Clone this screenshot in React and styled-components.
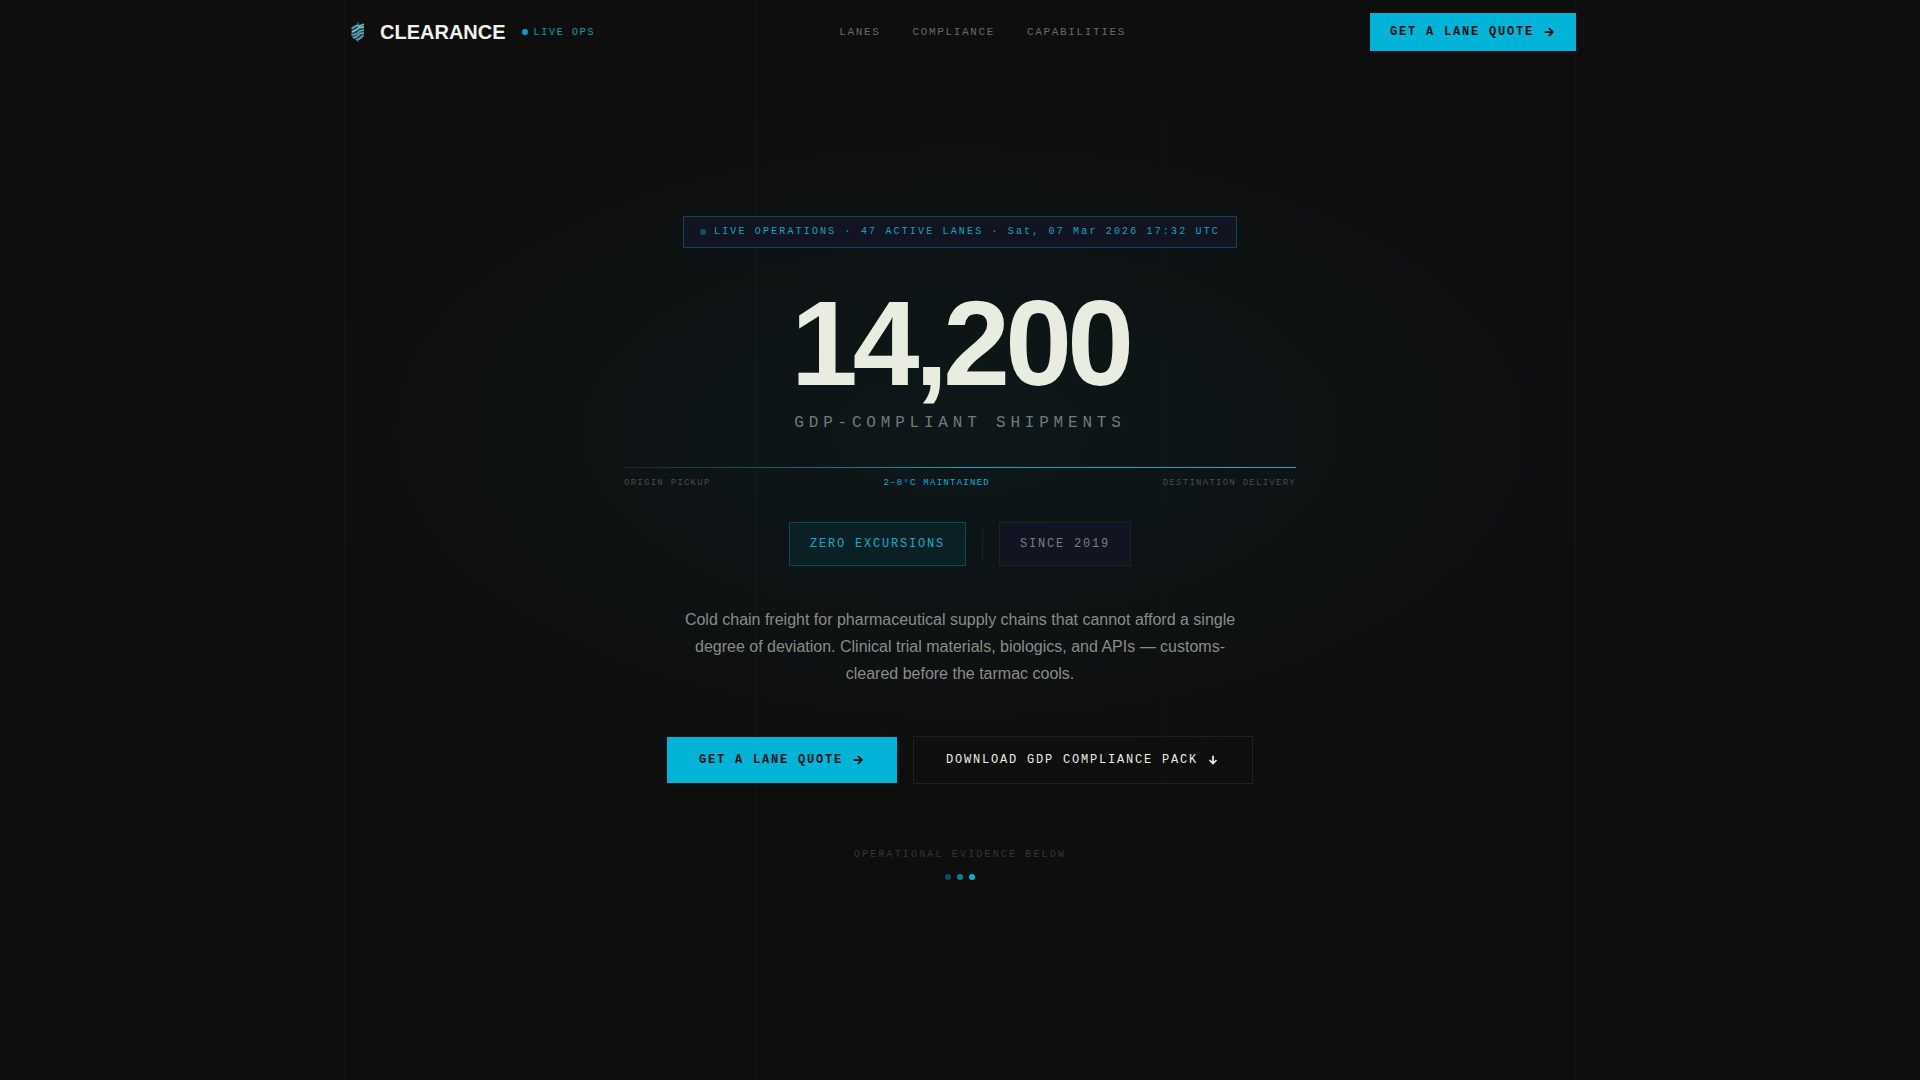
import React from 'react';
import styled, { createGlobalStyle, css } from 'styled-components';

const mono = "'Liberation Mono', 'Courier New', monospace";
const sans = "'Liberation Sans', Arial, sans-serif";

const GlobalStyle = createGlobalStyle`
  :root {
    --clr-bg: #0e0e0e;
    --clr-panel: #131421;
    --clr-cyan: #00b4d8;
    --clr-bone: #e8ede0;
    --clr-line: rgba(255, 255, 255, 0.025);
  }

  *, *::before, *::after {
    box-sizing: border-box;
  }

  body {
    margin: 0;
    background: var(--clr-bg);
    color: var(--clr-bone);
    font-family: ${sans};
  }
`;

const Page = styled.div`
  position: relative;
  min-height: 100vh;
  background: radial-gradient(
    ellipse 50% 45% at 50% 40%,
    rgba(0, 180, 216, 0.06),
    transparent 72%
  );
`;

const container = css`
  width: 100%;
  max-width: 1280px;
  margin: 0 auto;
  padding: 0 24px;
`;

// faint column rules behind the whole page
const GridLines = styled.div`
  ${container}
  position: absolute;
  inset: 0;
  display: grid;
  grid-template-columns: repeat(3, 1fr);
  pointer-events: none;

  span {
    border-left: 1px solid var(--clr-line);
  }

  span:last-child {
    border-right: 1px solid var(--clr-line);
  }
`;

const Header = styled.header`
  ${container}
  position: relative;
  display: flex;
  align-items: center;
  justify-content: space-between;
  height: 64px;
`;

const Brand = styled.div`
  display: flex;
  align-items: center;
  gap: 16px;
`;

const LogoLink = styled.a`
  display: flex;
  align-items: center;
  gap: 8px;
  color: #f0f2ec;
  font-size: 20px;
  font-weight: 700;
  text-decoration: none;
`;

const Status = styled.span`
  display: flex;
  align-items: center;
  gap: 6px;
  color: var(--clr-cyan);
  font-family: ${mono};
  font-size: 10px;
  letter-spacing: 0.17em;
  opacity: 0.9;
`;

const Dot = styled.span`
  width: 6px;
  height: 6px;
  border-radius: 50%;
  background: var(--clr-cyan);
  opacity: ${props => props.$level || 1};
`;

const Nav = styled.nav`
  display: flex;
  gap: 32px;
`;

const NavLink = styled.a`
  color: #6a6a6a;
  font-family: ${mono};
  font-size: 11px;
  letter-spacing: 0.15em;
  text-decoration: none;
`;

const Button = styled.button`
  display: inline-flex;
  align-items: center;
  gap: 8px;
  padding: ${props => (props.$compact ? '12px 20px' : '16px 32px')};
  border: 0;
  background: var(--clr-cyan);
  color: var(--clr-bg);
  font-family: ${mono};
  font-size: 12px;
  font-weight: 700;
  line-height: 14px;
  letter-spacing: 0.15em;
  cursor: pointer;

  ${props =>
    props.$outline &&
    css`
      border: 1px solid #1f2020;
      background: transparent;
      color: var(--clr-bone);
      font-weight: 400;
    `};
`;

const Hero = styled.main`
  ${container}
  position: relative;
  display: flex;
  flex-direction: column;
  align-items: center;
  padding-top: 152px;
  padding-bottom: 64px;
  text-align: center;
`;

const LiveBadge = styled.div`
  display: flex;
  align-items: center;
  gap: 8px;
  padding: 9px 16px;
  border: 1px solid rgba(0, 180, 216, 0.3);
  background: var(--clr-panel);
  color: #0ba6c5;
  font-family: ${mono};
  font-size: 10px;
  line-height: 12px;
  letter-spacing: 0.216em;
`;

const Headline = styled.h1`
  display: flex;
  flex-direction: column;
  gap: 11px;
  margin: 35px 0 0;
`;

const Figure = styled.span`
  font-size: 120px;
  line-height: 1;
  letter-spacing: -0.04em;
`;

const FigureLabel = styled.span`
  color: #737a7a;
  font-family: ${mono};
  font-size: 16px;
  font-weight: 400;
  line-height: 18px;
  letter-spacing: 0.3em;
`;

const Route = styled.div`
  width: 100%;
  max-width: 672px;
  margin-top: 35px;
`;

const RouteLine = styled.div`
  height: 1px;
  background: linear-gradient(90deg, #1f2626, #15545f 20%, #10a0bc 50%, #1fa9c4);
`;

const RouteStops = styled.div`
  display: flex;
  justify-content: space-between;
  margin-top: 10px;
`;

const Stop = styled.span`
  color: ${props => (props.$active ? 'var(--clr-cyan)' : '#484d4d')};
  font-family: ${mono};
  font-size: 9px;
  line-height: 10px;
  letter-spacing: 0.14em;
`;

const Proof = styled.div`
  display: flex;
  align-items: center;
  gap: 16px;
  margin-top: 34px;
`;

const ProofTag = styled.span`
  padding: 14px 20px;
  border: 1px solid ${props => (props.$accent ? 'rgba(0, 180, 216, 0.3)' : '#20222c')};
  background: ${props => (props.$accent ? '#0b2025' : 'var(--clr-panel)')};
  color: ${props => (props.$accent ? '#10acc8' : '#7a7d82')};
  font-family: ${mono};
  font-size: 12px;
  line-height: 14px;
  letter-spacing: 0.15em;
`;

const Divider = styled.span`
  width: 1px;
  height: 32px;
  background: #1c2224;
`;

const Lead = styled.p`
  max-width: 560px;
  margin: 40px 0 0;
  color: #8a8d87;
  font-size: 16px;
  line-height: 27px;
`;

const Actions = styled.div`
  display: flex;
  flex-wrap: wrap;
  align-items: center;
  justify-content: center;
  gap: 16px;
  margin-top: 49px;
`;

const Evidence = styled.div`
  display: flex;
  flex-direction: column;
  align-items: center;
  gap: 13px;
  margin-top: 65px;
  color: #363636;
  font-family: ${mono};
  font-size: 10px;
  line-height: 12px;
  letter-spacing: 0.216em;
`;

const Dots = styled.div`
  display: flex;
  gap: 6px;
`;

const LogoMark = () => (
  <svg width="28" height="28" viewBox="0 0 28 28" fill="none" aria-hidden="true">
    <path d="M8 8.5 14 5.5l6 2v10l-2 3-4 2.5-5.500-3L7 16z" fill="#1d4a54" />
    <path d="M7.500 10.500 13 7.500l3 .5 4-2" stroke="#6fb3bf" strokeWidth="1.400" />
    <path d="M8 14l5-2.500 2-2 5-.5" stroke="#8fc7cf" strokeWidth="1.400" />
    <path d="M7.500 17l5-1 3.500-3 4-1" stroke="#5da3b0" strokeWidth="1.400" />
    <path d="M9 20l4-1.500 3-3 4-.5" stroke="#8c9ca2" strokeWidth="1.400" />
    <path d="M12 22l3-1 4.500-3.500" stroke="#49b5c8" strokeWidth="1.400" />
    <path d="M14 4v3M14 21v3" stroke="#2b7382" />
  </svg>
);

const Arrow = ({ down }) => (
  <svg
    width="14"
    height="14"
    viewBox="0 0 24 24"
    fill="none"
    stroke="currentColor"
    strokeWidth="3"
    aria-hidden="true"
  >
    <path d={down ? 'M12 4.500v13M6 12l6 6 6-6' : 'M4.500 12h13M12 5.500l6.500 6.500-6.500 6.500'} />
  </svg>
);

const navItems = ['Lanes', 'Compliance', 'Capabilities'];

const App = () => {
  return (
    <Page>
      <GlobalStyle />
      <GridLines>
        <span />
        <span />
        <span />
      </GridLines>

      <Header>
        <Brand>
          <LogoLink href="#top">
            <LogoMark />
            CLEARANCE
          </LogoLink>
          <Status>
            <Dot />
            LIVE OPS
          </Status>
        </Brand>
        <Nav>
          {navItems.map(item => (
            <NavLink key={item} href={`#${item.toLowerCase()}`}>
              {item.toUpperCase()}
            </NavLink>
          ))}
        </Nav>
        <Button type="button" $compact>
          GET A LANE QUOTE
          <Arrow />
        </Button>
      </Header>

      <Hero id="top">
        <LiveBadge>
          <Dot $level={0.4} />
          LIVE OPERATIONS · 47 ACTIVE LANES · Sat, 07 Mar 2026 17:32 UTC
        </LiveBadge>

        <Headline>
          <Figure>14,200</Figure>
          <FigureLabel>GDP-COMPLIANT SHIPMENTS</FigureLabel>
        </Headline>

        <Route>
          <RouteLine />
          <RouteStops>
            <Stop>ORIGIN PICKUP</Stop>
            <Stop $active>2–8°C MAINTAINED</Stop>
            <Stop>DESTINATION DELIVERY</Stop>
          </RouteStops>
        </Route>

        <Proof>
          <ProofTag $accent>ZERO EXCURSIONS</ProofTag>
          <Divider />
          <ProofTag>SINCE 2019</ProofTag>
        </Proof>

        <Lead>
          Cold chain freight for pharmaceutical supply chains that cannot afford a single degree of
          deviation. Clinical trial materials, biologics, and APIs — customs-cleared before the
          tarmac cools.
        </Lead>

        <Actions>
          <Button type="button">
            GET A LANE QUOTE
            <Arrow />
          </Button>
          <Button type="button" $outline>
            DOWNLOAD GDP COMPLIANCE PACK
            <Arrow down />
          </Button>
        </Actions>

        <Evidence>
          OPERATIONAL EVIDENCE BELOW
          <Dots>
            <Dot $level={0.4} />
            <Dot $level={0.7} />
            <Dot />
          </Dots>
        </Evidence>
      </Hero>
    </Page>
  );
};

export default App;
